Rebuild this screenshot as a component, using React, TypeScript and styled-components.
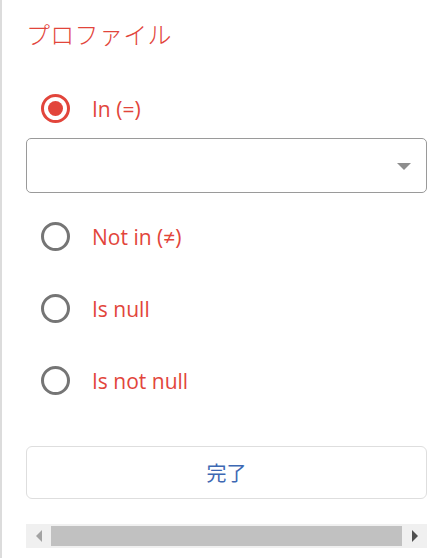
import React, { useState } from "react";
import styled, { createGlobalStyle } from "styled-components";

const Global = createGlobalStyle`
  html, body { margin: 0; padding: 0; background: #fff; }
  body { font-family: "Open Sans", "Noto Sans", "Noto Sans CJK JP", sans-serif; }
`;

const Panel = styled.div`
  box-sizing: border-box;
  width: 442px;
  height: 558px;
  border-left: 2px solid #dcdcdc;
  padding: 18px 15px 0 24px;
  display: flex;
  flex-direction: column;
  overflow: hidden;
`;

const Title = styled.h1`
  margin: 0;
  font-family: "Noto Sans CJK JP", sans-serif;
  font-weight: 300;
  font-size: 24px;
  line-height: 32px;
  color: #e2453b;
  letter-spacing: 0.3px;
`;

const Row = styled.label<{ $mt: number }>`
  display: flex;
  align-items: center;
  height: 44px;
  margin-top: ${(p) => p.$mt}px;
  padding-left: 15px;
  cursor: pointer;
`;

const Radio = styled.span<{ $checked: boolean }>`
  box-sizing: border-box;
  width: 29px;
  height: 29px;
  border-radius: 50%;
  border: 3px solid ${(p) => (p.$checked ? "#e2453b" : "#757575")};
  display: flex;
  align-items: center;
  justify-content: center;
  flex-shrink: 0;
  &::after {
    content: "";
    display: ${(p) => (p.$checked ? "block" : "none")};
    width: 15px;
    height: 15px;
    border-radius: 50%;
    background: #e2453b;
  }
`;

const Label = styled.span`
  margin-left: 22px;
  font-size: 21px;
  line-height: 28px;
  margin-top: 2px;
  color: #e2453b;
  font-family: "Open Sans", sans-serif;
`;

const Select = styled.div`
  box-sizing: border-box;
  margin-top: 8px;
  height: 55px;
  border: 1px solid #9a9a9a;
  border-radius: 5px;
  display: flex;
  align-items: center;
  justify-content: flex-end;
  padding-right: 15px;
`;

const Caret = styled.span`
  width: 0;
  height: 0;
  border-left: 7px solid transparent;
  border-right: 7px solid transparent;
  border-top: 7px solid #8e8e8e;
  margin-top: 2px;
`;

const DoneButton = styled.button`
  box-sizing: border-box;
  margin-top: 44px;
  height: 53px;
  width: 100%;
  border: 1px solid #dedede;
  border-radius: 6px;
  background: #fff;
  color: #3d68b3;
  font-family: "Noto Sans CJK JP", sans-serif;
  font-size: 20px;
  font-weight: 400;
  cursor: pointer;
`;

const Scrollbar = styled.div`
  margin-top: 25px;
  height: 24px;
  background: #f0f0f0;
  display: flex;
  align-items: center;
`;

const ArrowBox = styled.div`
  width: 25px;
  height: 24px;
  display: flex;
  align-items: center;
  justify-content: center;
  flex-shrink: 0;
`;

const Arrow = styled.span<{ $dir: "left" | "right"; $color: string }>`
  width: 0;
  height: 0;
  border-top: 6px solid transparent;
  border-bottom: 6px solid transparent;
  ${(p) =>
    p.$dir === "left"
      ? `border-right: 6px solid ${p.$color};`
      : `border-left: 6px solid ${p.$color};`}
`;

const Thumb = styled.div`
  flex: 1;
  height: 20px;
  background: #c1c1c1;
`;

const options = [
  { key: "in", label: "In (=)" },
  { key: "notin", label: "Not in (≠)" },
  { key: "null", label: "Is null" },
  { key: "notnull", label: "Is not null" },
];

export default function App() {
  const [sel, setSel] = useState("in");
  return (
    <>
      <Global />
      <Panel>
        <Title>プロファイル</Title>
        <Row $mt={36} onClick={() => setSel("in")}>
          <Radio $checked={sel === "in"} />
          <Label>{options[0].label}</Label>
        </Row>
        <Select>
          <Caret />
        </Select>
        {options.slice(1).map((o, i) => (
          <Row key={o.key} $mt={i === 0 ? 21 : 28} onClick={() => setSel(o.key)}>
            <Radio $checked={sel === o.key} />
            <Label>{o.label}</Label>
          </Row>
        ))}
        <DoneButton>完了</DoneButton>
        <Scrollbar>
          <ArrowBox>
            <Arrow $dir="left" $color="#a3a3a3" />
          </ArrowBox>
          <Thumb />
          <ArrowBox>
            <Arrow $dir="right" $color="#505050" />
          </ArrowBox>
        </Scrollbar>
      </Panel>
    </>
  );
}
